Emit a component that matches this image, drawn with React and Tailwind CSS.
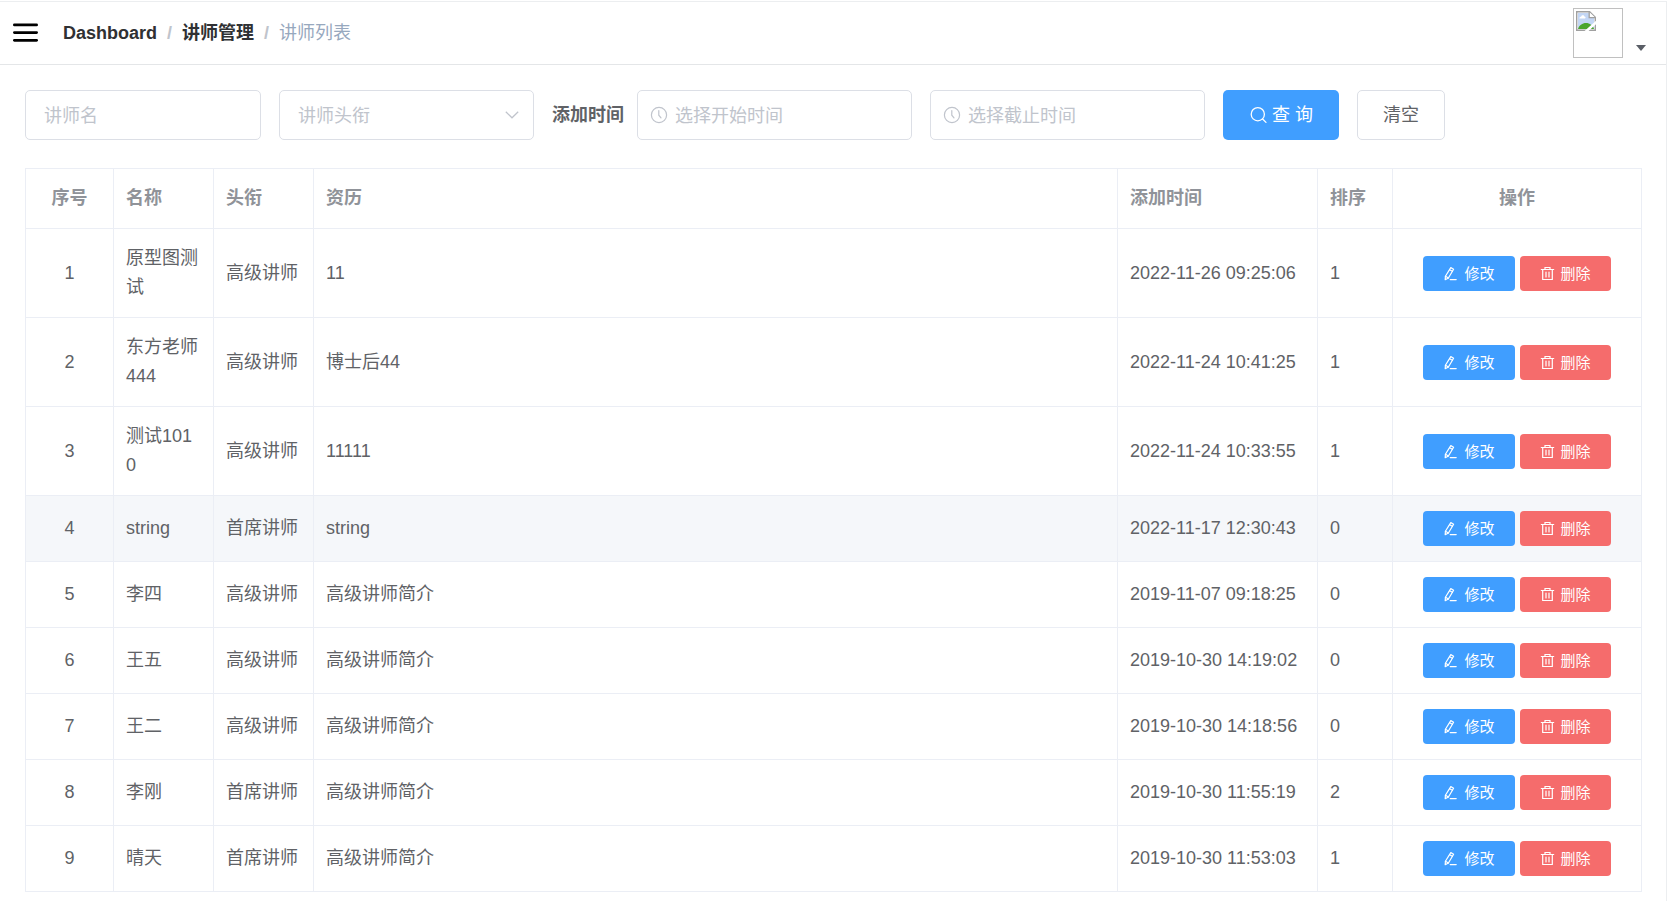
import { useState } from "react";

const teachers = [
  { id: 1, name: "原型图测试", level: "高级讲师", intro: "11", created: "2022-11-26 09:25:06", sort: 1 },
  { id: 2, name: "东方老师444", level: "高级讲师", intro: "博士后44", created: "2022-11-24 10:41:25", sort: 1 },
  { id: 3, name: "测试1010", level: "高级讲师", intro: "11111", created: "2022-11-24 10:33:55", sort: 1 },
  { id: 4, name: "string", level: "首席讲师", intro: "string", created: "2022-11-17 12:30:43", sort: 0 },
  { id: 5, name: "李四", level: "高级讲师", intro: "高级讲师简介", created: "2019-11-07 09:18:25", sort: 0 },
  { id: 6, name: "王五", level: "高级讲师", intro: "高级讲师简介", created: "2019-10-30 14:19:02", sort: 0 },
  { id: 7, name: "王二", level: "高级讲师", intro: "高级讲师简介", created: "2019-10-30 14:18:56", sort: 0 },
  { id: 8, name: "李刚", level: "首席讲师", intro: "高级讲师简介", created: "2019-10-30 11:55:19", sort: 2 },
  { id: 9, name: "晴天", level: "首席讲师", intro: "高级讲师简介", created: "2019-10-30 11:53:03", sort: 1 },
];

function MenuIcon() {
  return (
    <svg width="25" height="20" viewBox="0 0 25 20" fill="#000">
      <rect x="0" y="0.5" width="25" height="2.8" rx="1.4" />
      <rect x="0" y="8.2" width="25" height="2.8" rx="1.4" />
      <rect x="0" y="15.9" width="25" height="2.8" rx="1.4" />
    </svg>
  );
}

function SearchIcon() {
  return (
    <svg width="18" height="18" viewBox="0 0 18 18" fill="none" stroke="currentColor" strokeWidth="1.3" strokeLinecap="round">
      <circle cx="8.8" cy="8.2" r="6.6" />
      <path d="M13.6 13 17 16.4" />
    </svg>
  );
}

function ClockIcon() {
  return (
    <svg width="18" height="18" viewBox="0 0 18 18" fill="none" stroke="currentColor" strokeWidth="1.2" strokeLinecap="round">
      <circle cx="9" cy="9" r="7.6" />
      <path d="M8.8 4.6V9.2L11 11.8" />
    </svg>
  );
}

function EditIcon() {
  return (
    <svg width="15" height="15" viewBox="0 0 15 15" fill="none" stroke="currentColor" strokeWidth="1.2" strokeLinejoin="round" strokeLinecap="round">
      <path d="M7.8 1.6 10.6 3.2 5.4 12 2.2 13.7 2.4 10.3Z" />
      <path d="M6.6 3.7 9.4 5.3M2.5 10.3 5.4 12" />
      <path d="M7.2 13.6H13.2" />
    </svg>
  );
}

function DeleteIcon() {
  return (
    <svg width="15" height="15" viewBox="0 0 15 15" fill="none" stroke="currentColor" strokeWidth="1.2" strokeLinecap="round">
      <path d="M1.3 3.5H13.7M5 3.3V1.5H10V3.3" />
      <path d="M2.7 3.6V13.5H12.3V3.6" />
      <path d="M6 6V11M9 6V11" />
    </svg>
  );
}

function BrokenImage() {
  return (
    <svg width="20" height="20" viewBox="0 0 20 20">
      <path d="M0.7 0.7H13.6L19.3 6.2V19.3H0.7Z" fill="#fff" stroke="#a0a0a0" strokeWidth="1.4" />
      <path d="M2 2H13V6.8H18V18H2Z" fill="#c3d6f5" />
      <path d="M3.4 7.4C3.4 5.9 4.6 5.6 5.1 5.7 5.6 3.8 8.2 4 8.4 5.6 9.8 5.5 10 7.4 9 7.4Z" fill="#fff" />
      <path d="M2 18C3 14.5 6.3 12 10 12 13.7 12 17 14.5 18 18Z" fill="#4aa52e" />
      <path d="M13.2 1V6.6H19" fill="#fff" stroke="#a0a0a0" strokeWidth="1.3" />
      <path d="M8 20.5 20.5 9.2V12.8L12 20.5Z" fill="#fff" />
    </svg>
  );
}

function Header() {
  return (
    <header className="flex h-[63px] items-center border-b border-[#e4e6e8] pr-5 pl-[13px]">
      <button type="button" aria-label="菜单" className="mr-[25px]">
        <MenuIcon />
      </button>
      <nav className="flex items-center">
        <a href="#dashboard" className="font-bold text-[#303133]">Dashboard</a>
        <span className="mx-2.5 font-bold text-[#c0c4cc]">/</span>
        <a href="#teacher" className="font-bold text-[#303133]">讲师管理</a>
        <span className="mx-2.5 font-bold text-[#c0c4cc]">/</span>
        <span className="text-[#97a8be]">讲师列表</span>
      </nav>
      <button type="button" aria-label="用户菜单" className="ml-auto flex items-end gap-[13px]">
        <span className="block size-[50px] border border-[#c0c0c0] p-0.5">
          <BrokenImage />
        </span>
        <svg width="10" height="6" viewBox="0 0 10 6" className="mb-[7px]" fill="#5a5e66">
          <path d="M0 0H10L5 6Z" />
        </svg>
      </button>
    </header>
  );
}

function DateInput({ label }) {
  return (
    <div className="relative w-[275px]">
      <span className="pointer-events-none absolute top-4 left-[13px] text-[#c0c4cc]">
        <ClockIcon />
      </span>
      <input
        type="text"
        aria-label={label}
        placeholder={label}
        className="h-[50px] w-full rounded-[5px] border border-[#dcdfe6] pt-0.5 pr-9 pl-[37px] placeholder:text-[#c0c4cc]"
      />
    </div>
  );
}

function SearchForm() {
  const [level, setLevel] = useState("");

  return (
    <form className="flex flex-wrap items-center gap-[18px]" onSubmit={(e) => e.preventDefault()}>
      <input
        type="text"
        aria-label="讲师名"
        placeholder="讲师名"
        className="h-[50px] w-[236px] rounded-[5px] border border-[#dcdfe6] px-[18px] pt-0.5 placeholder:text-[#c0c4cc]"
      />
      <div className="relative w-[255px]">
        <select
          aria-label="讲师头衔"
          value={level}
          onChange={(e) => setLevel(e.target.value)}
          className="h-[50px] w-full appearance-none rounded-[5px] border border-[#dcdfe6] bg-white px-[18px] pt-0.5 text-[#c0c4cc]"
        >
          <option value="">讲师头衔</option>
          <option value="1">高级讲师</option>
          <option value="2">首席讲师</option>
        </select>
        <svg width="14" height="8" viewBox="0 0 14 8" className="pointer-events-none absolute top-[21px] right-[15px]" fill="none" stroke="#c0c4cc" strokeWidth="1.2">
          <path d="M0.8 0.8 7 6.8 13.2 0.8" />
        </svg>
      </div>
      <div className="flex items-center gap-[13px]">
        <span className="font-bold">添加时间</span>
        <DateInput label="选择开始时间" />
      </div>
      <DateInput label="选择截止时间" />
      <button type="submit" className="flex h-[50px] items-center gap-[5px] rounded-[5px] bg-[#409eff] px-[26px] text-white">
        <SearchIcon />
        <span>查 询</span>
      </button>
      <button type="reset" className="h-[50px] rounded-[5px] border border-[#dcdfe6] bg-white px-[25px]" onClick={() => setLevel("")}>
        清空
      </button>
    </form>
  );
}

function TeacherTable() {
  const cell = "border-r border-b border-[#ebeef5] px-3 py-[15px] break-all";
  const head = "border-r border-b border-[#ebeef5] px-3 py-[15px] text-left font-bold";

  return (
    <table className="w-full table-fixed border-separate border-spacing-0 border-t border-l border-[#ebeef5]">
      <colgroup>
        <col className="w-[88px]" />
        <col className="w-[100px]" />
        <col className="w-[100px]" />
        <col />
        <col className="w-[200px]" />
        <col className="w-[75px]" />
        <col className="w-[249px]" />
      </colgroup>
      <thead className="text-[#909399]">
        <tr>
          <th className="border-r border-b border-[#ebeef5] py-[15px] text-center font-bold">序号</th>
          <th className={head}>名称</th>
          <th className={head}>头衔</th>
          <th className={head}>资历</th>
          <th className={head}>添加时间</th>
          <th className={head}>排序</th>
          <th className="border-r border-b border-[#ebeef5] py-[15px] text-center font-bold">操作</th>
        </tr>
      </thead>
      <tbody>
        {teachers.map((t) => (
          <tr key={t.id} className={t.id === 4 ? "bg-[#f5f7fa]" : "hover:bg-[#f5f7fa]"}>
            <td className="border-r border-b border-[#ebeef5] text-center">{t.id}</td>
            <td className={cell}>{t.name}</td>
            <td className={cell}>{t.level}</td>
            <td className={cell}>{t.intro}</td>
            <td className={cell}>{t.created}</td>
            <td className={cell}>{t.sort}</td>
            <td className="border-r border-b border-[#ebeef5] py-[15px]">
              <div className="flex justify-center gap-[5px] text-[15px] text-white">
                <button type="button" className="flex h-[35px] items-center gap-1.5 rounded-[4px] bg-[#409eff] px-5">
                  <EditIcon />
                  修改
                </button>
                <button type="button" className="flex h-[35px] items-center gap-1.5 rounded-[4px] bg-[#f56c6c] px-5">
                  <DeleteIcon />
                  删除
                </button>
              </div>
            </td>
          </tr>
        ))}
      </tbody>
    </table>
  );
}

export default function App() {
  return (
    <div className="flex min-h-screen flex-col bg-white pt-px font-['Liberation_Sans','Noto_Sans_CJK_SC',sans-serif] text-[18px] leading-[29px] text-[#606266]">
      <div className="grow border-t border-r border-[#eceef0]">
        <Header />
        <main className="pt-[25px] pr-6 pl-[25px]">
          <SearchForm />
          {/* Teacher list */}
          <div className="mt-7">
            <TeacherTable />
          </div>
        </main>
      </div>
    </div>
  );
}
